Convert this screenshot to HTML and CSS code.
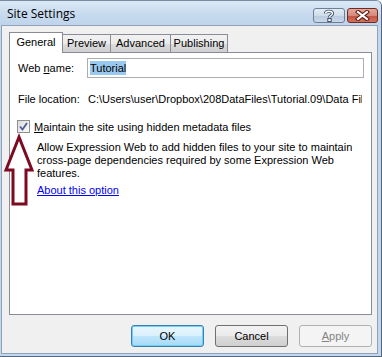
FILE: index.html
```html
<!DOCTYPE html>
<html lang="en">
<head>
    <meta charset="UTF-8">
    <title>Site Settings</title>
    <link rel="stylesheet" href="styles.css">
</head>
<body>
    <div class="window">
        <div class="titlebar">
            <span class="title">Site Settings</span>
            <div class="caption-buttons">
                <div class="cap cap-help">
                    <svg width="12" height="13" viewBox="0 0 12 13">
                        <path d="M2.5 4.5 C2.5 1.5 9.5 1.5 9.5 4.5 C9.5 6.5 6.5 6.5 6.5 8.5" fill="none" stroke="#3d4c63" stroke-width="3.2"/>
                        <path d="M2.5 4.5 C2.5 1.5 9.5 1.5 9.5 4.5 C9.5 6.5 6.5 6.5 6.5 8.5" fill="none" stroke="#fff" stroke-width="1.4"/>
                        <rect x="4.8" y="9.6" width="3.4" height="3" fill="#fff" stroke="#3d4c63" stroke-width="1"/>
                    </svg>
                </div>
                <div class="cap cap-close">
                    <svg width="15" height="11" viewBox="0 0 15 11">
                        <path d="M3 2 L12 9 M12 2 L3 9" stroke="#5a1a12" stroke-width="4.2" stroke-linecap="square"/>
                        <path d="M3 2 L12 9 M12 2 L3 9" stroke="#fff" stroke-width="2.2" stroke-linecap="square"/>
                    </svg>
                </div>
            </div>
        </div>

        <div class="client">
            <div class="tabs">
                <div class="tab tab-active">General</div>
                <div class="tab tab-preview">Preview</div>
                <div class="tab tab-advanced">Advanced</div>
                <div class="tab tab-publishing">Publishing</div>
            </div>

            <div class="panel">
                <div class="field-row">
                    <label class="field-label" for="webName">Web <u>n</u>ame:</label>
                    <div class="textbox" id="webName"><span class="selected">Tutorial</span></div>
                </div>

                <div class="field-row location-row">
                    <span class="field-label">File location:</span>
                    <span class="path">C:\Users\user\Dropbox\208DataFiles\Tutorial.09\Data Files\Tutorial</span>
                </div>

                <div class="check-row">
                    <span class="checkbox">
                        <svg width="9" height="9" viewBox="0 0 9 9">
                            <path d="M1 4.5 L3.5 7.5 L8 1" fill="none" stroke="#4b5f94" stroke-width="1.8"/>
                        </svg>
                    </span>
                    <span class="check-label"><u>M</u>aintain the site using hidden metadata files</span>
                </div>

                <p class="description">Allow Expression Web to add hidden files to your site to maintain cross-page dependencies required by some Expression Web features.</p>

                <a class="link" href="#">About this option</a>
            </div>

            <div class="buttons">
                <div class="btn btn-default">OK</div>
                <div class="btn">Cancel</div>
                <div class="btn btn-disabled"><u>A</u>pply</div>
            </div>
        </div>

        <svg class="arrow" width="40" height="80" viewBox="0 0 40 80">
            <polygon points="19,136 32,169 26,169 26,203 13,203 13,169 6,169" transform="translate(0,-130)" fill="#fff" stroke="#7d0a22" stroke-width="3" stroke-linejoin="miter"/>
        </svg>
    </div>
</body>
</html>
```

FILE: styles.css
```css
* {
    margin: 0;
    padding: 0;
    box-sizing: border-box;
}

body {
    margin: 0;
    background: #fff;
    font-family: 'Liberation Sans', Arial, sans-serif;
    font-size: 11px;
    color: #000;
}

.window {
    position: relative;
    width: 382px;
    height: 357px;
    display: flex;
    flex-direction: column;
    background: #c4d7ec;
    border-top: 1px solid #7a8ba0;
    border-right: 1px solid #55657a;
    border-bottom: 1px solid #55657a;
    border-top-right-radius: 6px;
    overflow: hidden;
}

.titlebar {
    height: 24px;
    display: flex;
    justify-content: space-between;
    align-items: flex-start;
    padding-left: 7px;
    background: linear-gradient(#dce8f6, #c6d9ee 60%, #bfd4eb);
}

.title {
    font-family: 'Open Sans', 'Liberation Sans', sans-serif;
    font-size: 12px;
    line-height: 16px;
    margin-top: 5px;
    color: #000;
}

.caption-buttons {
    display: flex;
    gap: 2px;
    margin-top: 7px;
    margin-right: 3px;
}

.cap {
    width: 32px;
    height: 15px;
    border: 1px solid #6c7f97;
    border-radius: 3px;
    display: flex;
    align-items: center;
    justify-content: center;
}

.cap-help {
    background: linear-gradient(#e3ecf6, #cfdcea 50%, #b9cbe0 51%, #c9d8e9);
}

.cap-close {
    width: 31px;
    border-color: #6f2b22;
    background: linear-gradient(#e6a79a, #d58a7c 50%, #c4523f 51%, #d0735f);
}

.client {
    flex: 1;
    margin: 0 3px 2px 1px;
    border: 1px solid #8ea2bb;
    background: #f0f0f0;
    padding: 6px 0 0 7px;
    display: flex;
    flex-direction: column;
}

.tabs {
    display: flex;
    align-items: flex-end;
    height: 21px;
    margin-bottom: -1px;
    position: relative;
    z-index: 1;
}

.tab {
    height: 18px;
    margin-bottom: 1px;
    margin-left: -1px;
    border: 1px solid #898c95;
    border-bottom: none;
    background: linear-gradient(#f2f2f2, #ebebeb 50%, #dddddd 51%, #cfcfcf);
    text-align: center;
    line-height: 17px;
    color: #000;
}

.tab-active {
    height: 21px;
    margin-bottom: 0;
    margin-left: 0;
    width: 54px;
    background: #fff;
    line-height: 18px;
}

.tab-preview {
    width: 49px;
}

.tab-advanced {
    width: 61px;
}

.tab-publishing {
    width: 58px;
}

.panel {
    width: 363px;
    height: 263px;
    border: 1px solid #898c95;
    background: #fff;
    padding: 5px 0 0 8px;
}

.field-row {
    display: flex;
    align-items: center;
    height: 20px;
}

.field-label {
    width: 69px;
    flex-shrink: 0;
}

.textbox {
    width: 277px;
    height: 20px;
    border: 1px solid #abadb3;
    padding: 2px 0 0 2px;
    line-height: 14px;
}

.selected {
    background: #99c9ef;
    padding: 1px 0;
}

.location-row {
    margin-top: 14px;
    height: 14px;
}

.path {
    width: 275px;
    padding-left: 1px;
    white-space: nowrap;
    overflow: hidden;
}

.check-row {
    display: flex;
    align-items: center;
    gap: 4px;
    margin-top: 14px;
    margin-left: -1px;
    height: 13px;
}

.checkbox {
    width: 13px;
    height: 13px;
    border: 1px solid #8f8f8f;
    background: linear-gradient(135deg, #dcdcdc, #fbfbfb);
    display: flex;
    align-items: center;
    justify-content: center;
}

.description {
    margin: 8px 0 0 19px;
    width: 320px;
    line-height: 13px;
}

.link {
    display: inline-block;
    margin: 4px 0 0 19px;
    line-height: 13px;
    color: #0000ff;
}

.buttons {
    display: flex;
    gap: 11px;
    margin-top: 10px;
    padding-left: 122px;
}

.btn {
    width: 73px;
    height: 22px;
    border: 1px solid #707070;
    border-radius: 3px;
    background: linear-gradient(#f2f2f2, #ebebeb 50%, #dddddd 51%, #cfcfcf);
    text-align: center;
    line-height: 20px;
}

.btn-default {
    border-color: #3c7fb1;
    background: linear-gradient(#eaf6fd, #d9f0fc 50%, #bee6fd 51%, #a7d9f5);
    box-shadow: inset 0 0 0 1px #6fd0f8;
}

.btn-disabled {
    border-color: #adb2b5;
    background: #f4f4f4;
    color: #838383;
}

.arrow {
    position: absolute;
    left: 0;
    top: 130px;
}
```
